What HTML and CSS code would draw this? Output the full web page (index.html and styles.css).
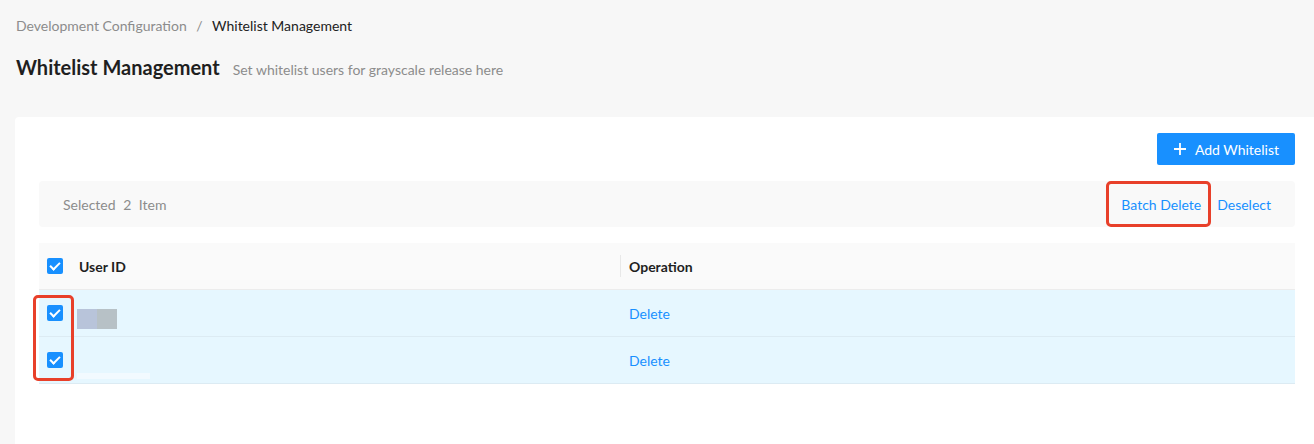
FILE: index.html
```html
<!DOCTYPE html>
<html>

<head>
    <meta charset="UTF-8">
    <title>Whitelist Management</title>
    <link rel="stylesheet" href="styles.css">
</head>

<body>
    <div class="page">
        <div class="breadcrumb">
            <span class="crumb">Development Configuration</span>
            <span class="sep">/</span>
            <span class="crumb current">Whitelist Management</span>
        </div>
        <div class="page-head">
            <h2>Whitelist Management</h2>
            <span class="desc">Set whitelist users for grayscale release here</span>
        </div>

        <div class="card">
            <div class="toolbar">
                <button class="btn-primary">
                    <svg width="14" height="14" viewBox="0 0 14 14">
                        <path d="M7 1v12M1 7h12" stroke="#fff" stroke-width="1.8" fill="none" />
                    </svg>
                    Add Whitelist
                </button>
            </div>

            <div class="selection-bar">
                <span class="sel-info">Selected <b>2</b> Item</span>
                <div class="sel-actions">
                    <a class="link marked">Batch Delete</a>
                    <a class="link">Deselect</a>
                </div>
            </div>

            <div class="table">
                <div class="row head">
                    <div class="cell check"><span class="checkbox"></span></div>
                    <div class="cell">User ID</div>
                    <div class="cell op">Operation</div>
                </div>
                <div class="row selected">
                    <div class="cell check"><span class="checkbox"></span></div>
                    <div class="cell"><span class="blur blur-a"></span></div>
                    <div class="cell op"><a class="link">Delete</a></div>
                </div>
                <div class="row selected">
                    <div class="cell check"><span class="checkbox"></span></div>
                    <div class="cell"><span class="blur blur-b"></span></div>
                    <div class="cell op"><a class="link">Delete</a></div>
                </div>
                <span class="mark-checks"></span>
            </div>
        </div>
    </div>
</body>

</html>
```

FILE: styles.css
```css
* {
    box-sizing: border-box;
}

body,
html {
    margin: 0;
    padding: 0;
    overflow: hidden;
    height: 100vh;
    background-color: #f7f7f7;
    font-family: "Lato", "Noto Sans", sans-serif;
    font-size: 14px;
    color: #222;
}

.page {
    padding: 17px 0 0 16px;
}

.breadcrumb {
    line-height: 18px;
    color: #8c8c8c;
}

.breadcrumb .sep {
    margin: 0 6px;
    color: #8c8c8c;
}

.breadcrumb .current {
    color: #222;
}

.page-head {
    display: flex;
    align-items: baseline;
    gap: 13px;
    margin-top: 18px;
}

.page-head h2 {
    margin: 0;
    font-size: 20px;
    font-weight: 700;
    line-height: 28px;
    color: #1f1f1f;
}

.page-head .desc {
    color: #8c8c8c;
}

.card {
    margin-top: 36px;
    margin-left: -1px;
    margin-right: -5px;
    background-color: #fff;
    border-radius: 4px;
    padding: 16px 24px 80px;
}

.toolbar {
    display: flex;
    justify-content: flex-end;
}

.btn-primary {
    display: flex;
    align-items: center;
    gap: 8px;
    height: 32px;
    padding: 0 16px;
    border: none;
    border-radius: 2px;
    background-color: #1890ff;
    color: #fff;
    font-family: inherit;
    font-size: 14px;
    cursor: pointer;
}

.selection-bar {
    margin-top: 16px;
    height: 46px;
    display: flex;
    justify-content: space-between;
    align-items: center;
    padding: 0 24px;
    background-color: #f9f9f9;
    border-radius: 4px;
}

.sel-info {
    color: #8c8c8c;
}

.sel-info b {
    font-weight: 400;
    margin: 0 4px;
}

.sel-actions {
    display: flex;
    align-self: stretch;
    gap: 16px;
}

.link {
    color: #1890ff;
    cursor: pointer;
}

.sel-actions .link {
    display: flex;
    align-items: center;
}

.marked {
    position: relative;
}

.marked::after {
    content: "";
    position: absolute;
    left: -15px;
    right: -10px;
    top: 0;
    bottom: 0;
    border: 3px solid #e8402a;
    border-radius: 5px;
}

.table {
    margin-top: 16px;
    position: relative;
}

.row {
    display: grid;
    grid-template-columns: 32px 549px 1fr;
    height: 47px;
    border-bottom: 1px solid #ececec;
    align-items: center;
}

.row.head {
    background-color: #fafafa;
    font-weight: 700;
    color: #1f1f1f;
}

.row.selected {
    background-color: #e6f7ff;
    border-bottom-color: #dcebf3;
}

.cell {
    padding-left: 8px;
    position: relative;
    height: 100%;
    display: flex;
    align-items: center;
}

.cell.op {
    padding-left: 9px;
}

.head .cell.op::before {
    content: "";
    position: absolute;
    left: 0;
    top: 12px;
    bottom: 12px;
    width: 1px;
    background-color: #e8e8e8;
}

.checkbox {
    width: 16px;
    height: 16px;
    border-radius: 2px;
    background-color: #1890ff;
    position: relative;
}

.checkbox::after {
    content: "";
    position: absolute;
    left: 5px;
    top: 2px;
    width: 4px;
    height: 8px;
    border: solid #fff;
    border-width: 0 2px 2px 0;
    transform: rotate(45deg);
}

.blur {
    display: block;
    margin-left: -2px;
}

.blur-a {
    width: 40px;
    height: 20px;
    margin-top: 12px;
    background: linear-gradient(90deg, #b8c4da 0 50%, #b7c1c6 50% 100%);
}

.blur-b {
    width: 73px;
    height: 6px;
    margin-top: 32px;
    background-color: #f2faff;
}

.mark-checks {
    position: absolute;
    left: -6px;
    top: 52px;
    width: 41px;
    height: 86px;
    border: 3px solid #e8402a;
    border-radius: 5px;
}
```
